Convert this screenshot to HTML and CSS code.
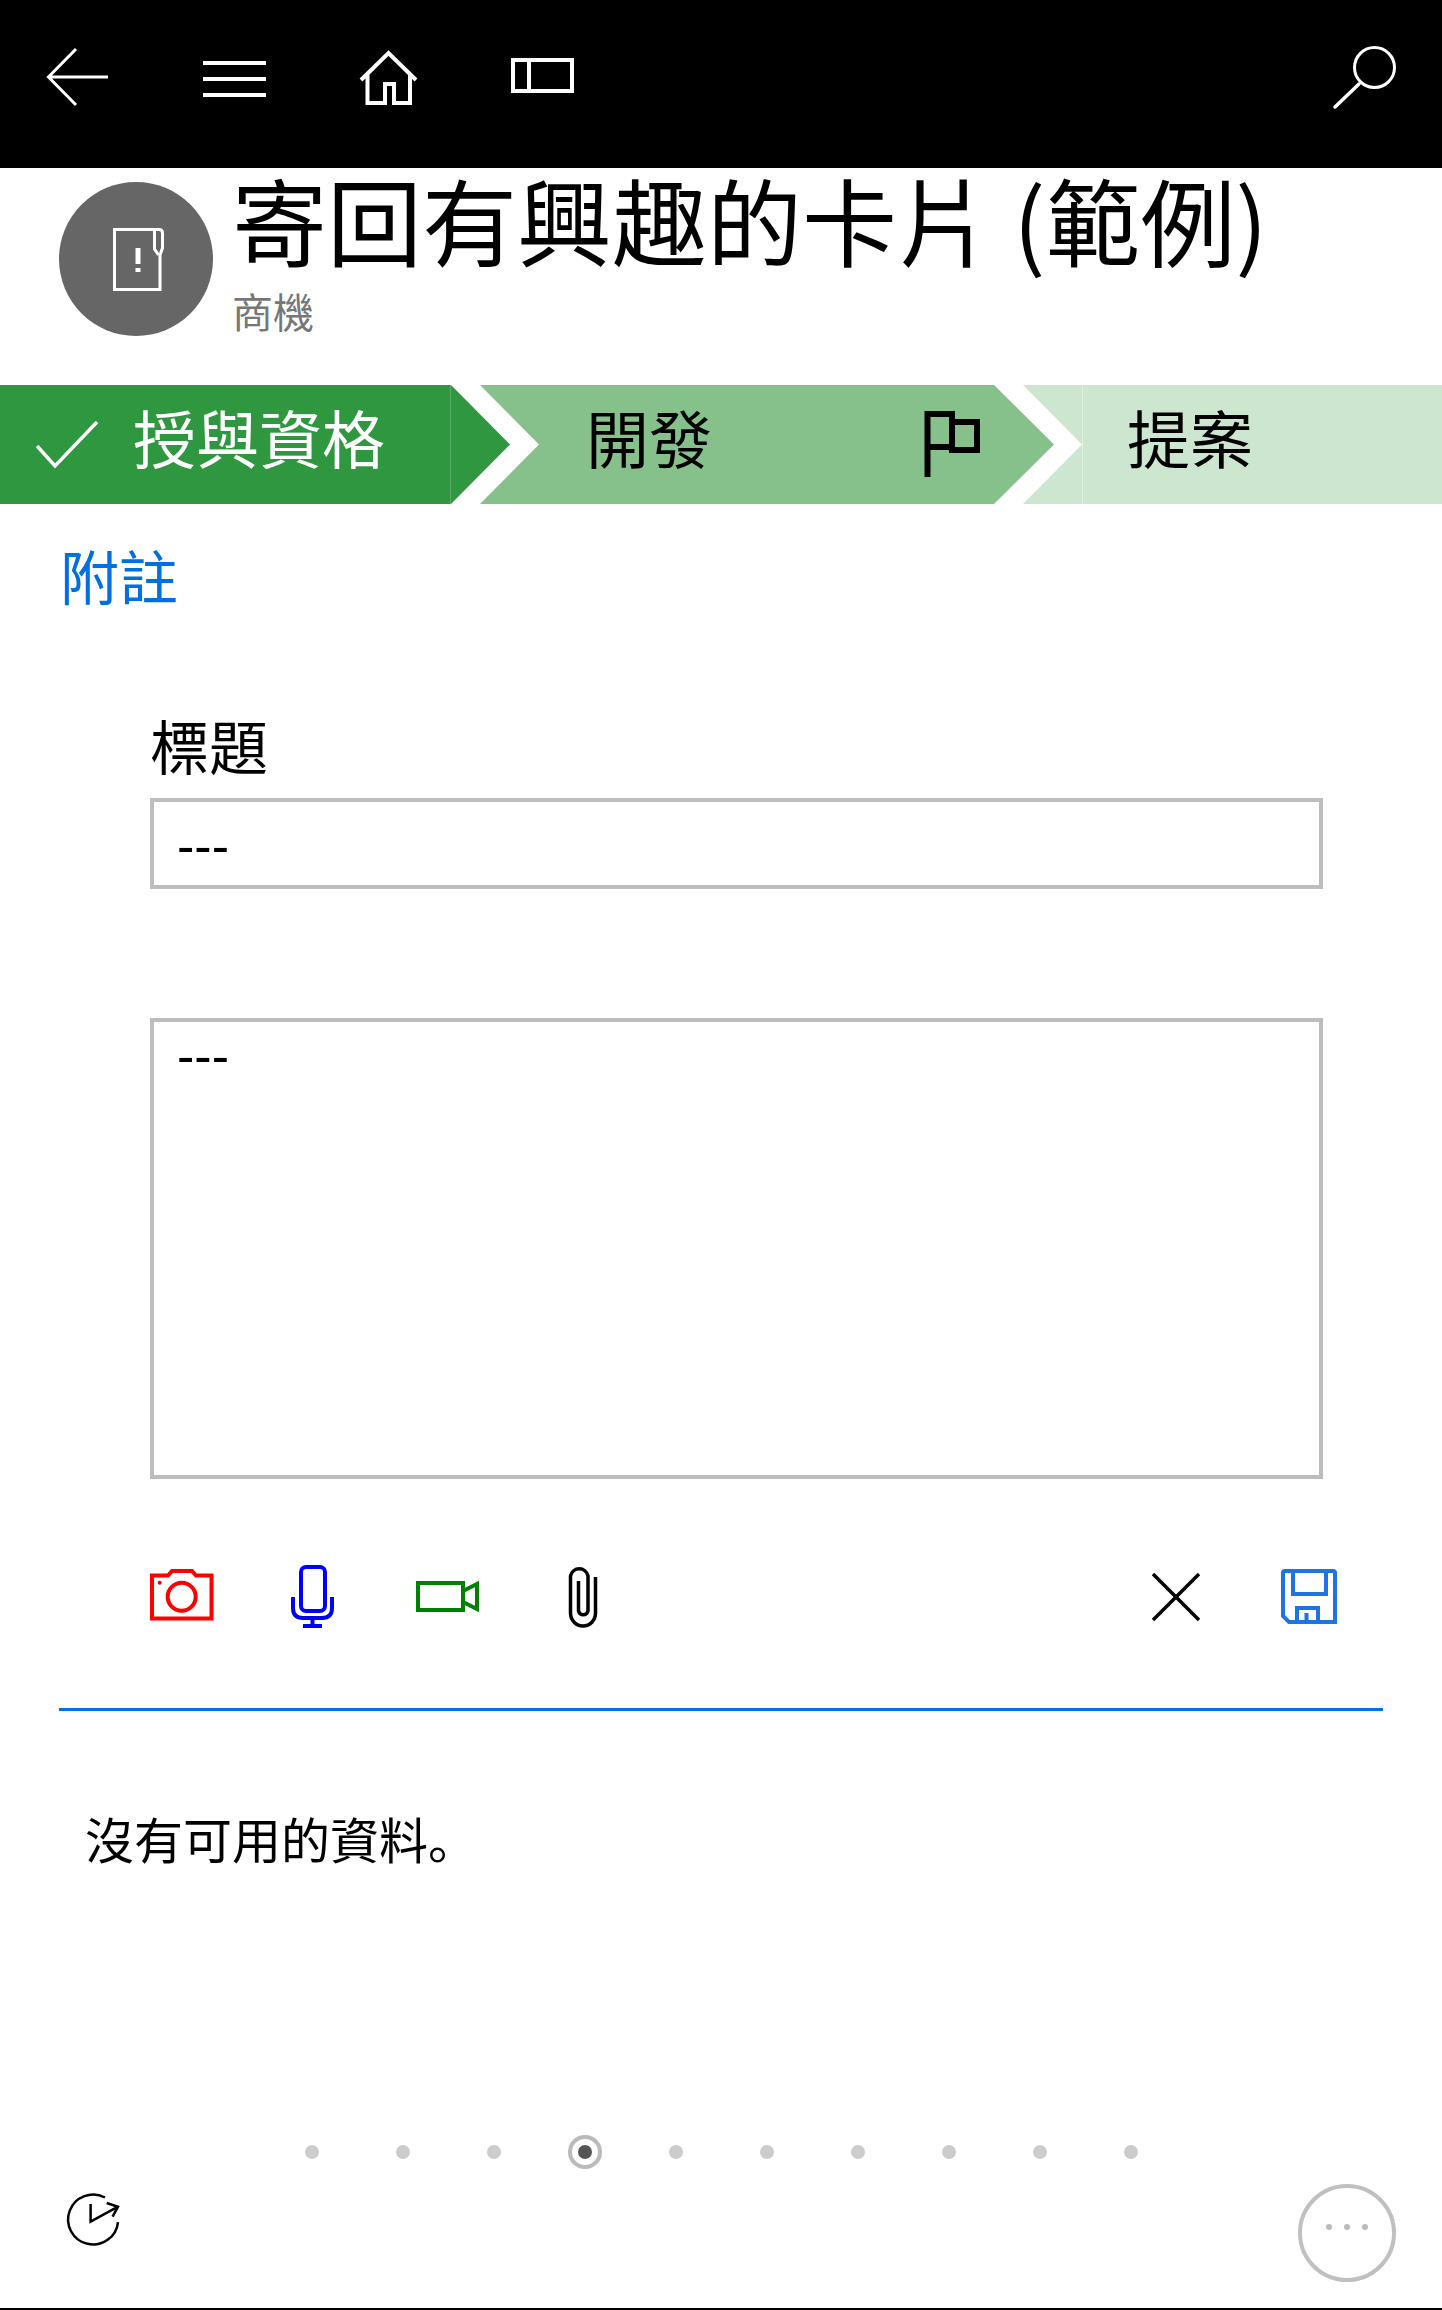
FILE: index.html
```html
<!DOCTYPE html>
<html lang="zh-TW">
<head>
    <meta charset="UTF-8">
    <title>寄回有興趣的卡片 (範例)</title>
    <link rel="stylesheet" href="styles.css">
</head>
<body>
<div class="page">
    <!-- top bar -->
    <header class="topbar">
        <svg class="nav-icon" viewBox="0 0 66 64"><path d="M31 4 L3.5 32 L31 60 M3.5 32 H63"/></svg>
        <svg class="nav-icon" viewBox="0 0 66 64"><path class="thick" d="M2 18 H65 M2 34 H65 M2 50 H65"/></svg>
        <svg class="nav-icon" viewBox="0 0 66 64"><path class="thick" d="M4 35 L31.5 8 L59 35 M10.5 29 V58 H28 V39 H37 V58 H53 V29"/></svg>
        <svg class="nav-icon" viewBox="0 0 66 64"><path class="thick" d="M0 15 H59 V46 H0 Z M16 15 V46"/></svg>
        <svg class="nav-icon search" viewBox="0 0 66 64"><circle cx="40.5" cy="22.5" r="20"/><path class="round" d="M25 39 L1 62"/></svg>
    </header>

    <!-- record title -->
    <section class="record">
        <div class="avatar">
            <svg viewBox="0 0 51 63" class="avatar-icon"><path d="M1.5 1.5 H46 Q49.5 1.5 49.5 5 V20 L47 27 V61.5 H1.5 Z M41.5 1.5 V21 L45.5 27"/><path class="mark" d="M25 20 V36 M25 40 V44"/></svg>
        </div>
        <div class="record-text">
            <h1>寄回有興趣的卡片 (範例)</h1>
            <div class="record-type">商機</div>
        </div>
    </section>

    <!-- process stages -->
    <nav class="stages">
        <div class="stage stage-done">
            <svg class="stage-check" viewBox="0 0 64 48"><path d="M1 25 L19 45 L61 1"/></svg>
            <span>授與資格</span>
        </div>
        <div class="stage stage-active">
            <span>開發</span>
            <svg class="stage-flag" viewBox="0 0 56 66"><path d="M3.5 66 V3 H28 V39 H53 V11 H28 M3.5 36 H28"/></svg>
        </div>
        <div class="stage stage-next">
            <span>提案</span>
        </div>
    </nav>

    <a class="notes-link">附註</a>

    <!-- note form -->
    <form class="note-form">
        <label class="note-label">標題</label>
        <input class="note-input" type="text" value="---">
        <textarea class="note-area">---</textarea>
    </form>

    <div class="toolbar">
        <svg class="tool red" viewBox="0 0 64 64"><path d="M2 10.5 H18 L22 6 H42 L46 10.5 H61.5 V53.5 H2 Z"/><circle cx="31.7" cy="31.7" r="14"/><circle class="fill" cx="9.7" cy="17.7" r="2"/></svg>
        <svg class="tool blue" viewBox="0 0 64 64"><rect x="18" y="2" width="24" height="44" rx="5"/><path d="M10 32 V43 Q10 53 20 53 H39 Q49 53 49 43 V32 M29.5 53 V61 M20 61 H39"/></svg>
        <svg class="tool green" viewBox="0 0 64 64"><path d="M2 18 H47 V45 H2 Z M47 26 L61 19 V44 L47 37"/></svg>
        <svg class="tool black" viewBox="0 0 64 64"><path d="M46.5 12 V48 A12.5 13 0 0 1 21.5 48 V11 A9 9.5 0 0 1 39 11 V46 A5 5.5 0 0 1 29.5 46 V16"/></svg>
        <svg class="tool black tool-right" viewBox="0 0 64 64"><path d="M9 9 L55 55 M55 9 L9 55"/></svg>
        <svg class="tool save" viewBox="0 0 64 64"><path d="M8 6 H56 Q58 6 58 8 V57 H12 L6 51 V8 Q6 6 8 6 Z M16 6 V29 H49 V6 M20 57 V43 H41 V57 M29.5 48 V57"/></svg>
    </div>

    <div class="divider"></div>

    <p class="empty-text">沒有可用的資料<span class="stop" lang="zh-CN">。</span></p>

    <div class="dots">
        <span class="dot"></span>
        <span class="dot"></span>
        <span class="dot"></span>
        <span class="dot dot-active"></span>
        <span class="dot"></span>
        <span class="dot"></span>
        <span class="dot"></span>
        <span class="dot"></span>
        <span class="dot"></span>
        <span class="dot"></span>
    </div>

    <footer class="bottom-row">
        <svg class="history" viewBox="0 0 52 52"><path d="M38 3.5 A25 25 0 1 0 51 28 M23.6 10 V27.7 L51 12.7 M39.7 9 L51 12.7 L45.6 22.7"/></svg>
        <div class="more">
            <span></span><span></span><span></span>
        </div>
    </footer>
</div>
</body>
</html>
```

FILE: styles.css
```css
body {
    margin: 0;
    background-color: white;
    font-family: "Noto Sans CJK TC", "Noto Sans", sans-serif;
    color: black;
}
.page {
    box-sizing: border-box;
    height: 2310px;
    border-bottom: 2px solid black;
    overflow: hidden;
}

/* top bar */
.topbar {
    display: flex;
    gap: 90px;
    height: 168px;
    box-sizing: border-box;
    padding: 45px 42px 0 45px;
    background-color: black;
}
.nav-icon {
    width: 66px;
    height: 64px;
    overflow: visible;
    fill: none;
    stroke: white;
    stroke-width: 3;
}
.nav-icon .thick {
    stroke-width: 4;
}
.nav-icon .round {
    stroke-width: 3.5;
    stroke-linecap: round;
}
.search {
    margin-left: auto;
}

/* record title */
.record {
    display: flex;
    height: 217px;
}
.avatar {
    display: flex;
    justify-content: center;
    align-items: center;
    width: 154px;
    height: 154px;
    margin: 14px 0 0 59px;
    border-radius: 50%;
    background-color: #666;
}
.avatar-icon {
    width: 51px;
    height: 63px;
    margin-left: 5px;
    fill: none;
    stroke: white;
    stroke-width: 3;
}
.avatar-icon .mark {
    stroke-width: 5;
}
.record-text {
    margin: 3px 0 0 19px;
}
.record-text h1 {
    margin: 0;
    font-size: 95px;
    font-weight: 400;
    line-height: 95px;
    white-space: nowrap;
}
.record-type {
    margin-top: 24px;
    font-size: 41px;
    line-height: 41px;
    color: #777;
}

/* process stages */
.stages {
    display: flex;
    height: 119px;
}
.stage {
    display: flex;
    align-items: center;
    flex: none;
    height: 100%;
    font-size: 63px;
}
.stage span {
    margin-bottom: 18px;
    line-height: 1;
}
.stage-done {
    width: 510px;
    padding-left: 35px;
    box-sizing: border-box;
    color: white;
    background: linear-gradient(90deg, #2f9740 450px, #5aab66 450px, #5aab66 451px, #2f9740 451px);
    clip-path: polygon(0 0, 451px 0, 510px 50%, 451px 100%, 0 100%);
}
.stage-check {
    width: 64px;
    height: 48px;
    margin: 0 33px 0 1px;
    fill: none;
    stroke: white;
    stroke-width: 3.5;
}
.stage-active {
    width: 574px;
    margin-left: -30px;
    padding-left: 106px;
    box-sizing: border-box;
    background-color: #86c18b;
    clip-path: polygon(0 0, 514px 0, 574px 50%, 514px 100%, 0 100%, 59px 50%);
}
.stage-flag {
    width: 56px;
    height: 66px;
    margin: 0 0 2px 212px;
    fill: none;
    stroke: black;
    stroke-width: 6;
}
.stage-next {
    flex: 1;
    margin-left: -31px;
    padding-left: 104px;
    background: linear-gradient(90deg, #cde6cf 59px, #e0f0e1 59px, #e0f0e1 60px, #cde6cf 60px);
    clip-path: polygon(0 0, 100% 0, 100% 100%, 0 100%, 59px 50%);
}

.notes-link {
    display: block;
    margin: 41px 0 0 60px;
    font-size: 59px;
    line-height: 59px;
    color: #0070e0;
}

/* note form */
.note-form {
    display: flex;
    flex-direction: column;
    width: 1173px;
    margin: 111px 0 0 150px;
}
.note-label {
    margin-bottom: 24px;
    font-size: 59px;
    line-height: 59px;
}
.note-input, .note-area {
    box-sizing: border-box;
    width: 100%;
    margin: 0;
    padding: 0 23px;
    border: 4px solid #bdbdbd;
    border-radius: 0;
    outline: none;
    font-family: "Liberation Sans", sans-serif;
    font-size: 52px;
    color: black;
    background-color: white;
}
.note-input {
    height: 91px;
    padding-top: 4px;
}
.note-area {
    height: 461px;
    margin-top: 129px;
    padding-top: 4px;
    line-height: 60px;
    resize: none;
}

/* tool icons */
.toolbar {
    display: flex;
    gap: 69px;
    margin-top: 86px;
    padding: 0 101px 0 150px;
}
.tool {
    width: 64px;
    height: 64px;
    flex: none;
    fill: none;
    stroke-width: 4;
}
.red { stroke: #f00; }
.red .fill { fill: #f00; stroke: none; }
.blue { stroke: #00f; }
.green { stroke: #008000; }
.black { stroke: black; stroke-width: 3.5; }
.save { stroke: #1e74e2; }
.tool-right {
    margin-left: auto;
}

.divider {
    width: 1324px;
    height: 3px;
    margin: 79px 0 0 59px;
    background-color: #0070e0;
}
.empty-text {
    margin: 102px 0 0 85px;
    font-size: 49px;
    line-height: 49px;
}
/* the full stop sits low and left in this glyph set */
.empty-text .stop {
    font-family: "Noto Sans CJK SC", sans-serif;
}

/* page dots */
.dots {
    display: flex;
    gap: 77px;
    margin: 283px 0 0 305px;
}
.dot {
    width: 14px;
    height: 14px;
    border-radius: 50%;
    background-color: #ccc;
}
.dot-active {
    background-color: #555;
    box-shadow: 0 0 0 6px white, 0 0 0 10px #bbb;
}

.bottom-row {
    display: flex;
    justify-content: space-between;
    align-items: flex-start;
    margin-top: 25px;
    padding: 0 46px 0 67px;
}
.history {
    width: 52px;
    height: 52px;
    margin-top: 10px;
    overflow: visible;
    fill: none;
    stroke: black;
    stroke-width: 2.5;
}
.more {
    display: flex;
    justify-content: center;
    align-items: center;
    gap: 12px;
    box-sizing: border-box;
    width: 98px;
    height: 98px;
    padding-bottom: 12px;
    border: 4px solid #c0c0c0;
    border-radius: 50%;
}
.more span {
    width: 6px;
    height: 6px;
    border-radius: 50%;
    background-color: #bbb;
}
```
